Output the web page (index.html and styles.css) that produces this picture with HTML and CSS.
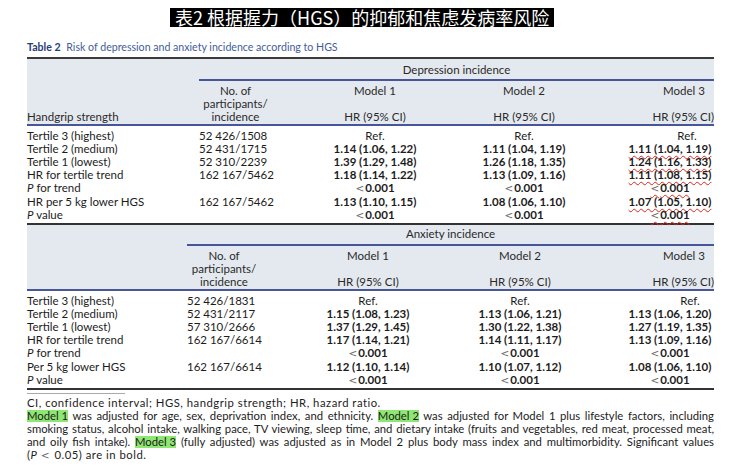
FILE: index.html
```html
<!DOCTYPE html>
<html>
<head>
<meta charset="utf-8">
<link rel="stylesheet" href="styles.css">
</head>
<body>
<div class="page">
  <div class="title-row"><span class="title">表2 根据握力（HGS）的抑郁和焦虑发病率风险</span></div>
  <div class="caption"><b>Table 2</b> Risk of depression and anxiety incidence according to HGS</div>
  <div class="table">
    <section class="sec sec1">
      <div class="head">
        <div class="span-title">Depression incidence</div>
        <div class="grid head-grid">
          <div class="c label hl">Handgrip strength</div>
          <div class="c n nh">No. of<br>participants/<br>incidence</div>
          <div class="c m mh"><span>Model 1</span><span>HR (95% CI)</span></div>
          <div class="c m mh"><span>Model 2</span><span>HR (95% CI)</span></div>
          <div class="c m m3 m3h mh"><span>Model 3</span><span>HR (95% CI)</span></div>
        </div>
      </div>
      <div class="grid rows">
        <div class="c label">Tertile 3 (highest)</div><div class="c n">52 426/1508</div><div class="c m">Ref.</div><div class="c m">Ref.</div><div class="c m m3 m3r">Ref.</div>
        <div class="c label">Tertile 2 (medium)</div><div class="c n">52 431/1715</div><div class="c m"><b>1.14 (1.06, 1.22)</b></div><div class="c m"><b>1.11 (1.04, 1.19)</b></div><div class="c m m3"><b class="wavy">1.11 (1.04, 1.19)</b></div>
        <div class="c label">Tertile 1 (lowest)</div><div class="c n">52 310/2239</div><div class="c m"><b>1.39 (1.29, 1.48)</b></div><div class="c m"><b>1.26 (1.18, 1.35)</b></div><div class="c m m3"><b class="wavy">1.24 (1.16, 1.33)</b></div>
        <div class="c label">HR for tertile trend</div><div class="c n">162 167/5462</div><div class="c m"><b>1.18 (1.14, 1.22)</b></div><div class="c m"><b>1.13 (1.09, 1.16)</b></div><div class="c m m3"><b class="wavy">1.11 (1.08, 1.15)</b></div>
        <div class="c label"><i>P</i> for trend</div><div class="c n"></div><div class="c m"><span class="lt">&lt;</span><b>0.001</b></div><div class="c m"><span class="lt">&lt;</span><b>0.001</b></div><div class="c m m3"><span class="wavy"><span class="lt">&lt;</span><b>0.001</b></span></div>
        <div class="c label">HR per 5 kg lower HGS</div><div class="c n">162 167/5462</div><div class="c m"><b>1.13 (1.10, 1.15)</b></div><div class="c m"><b>1.08 (1.06, 1.10)</b></div><div class="c m m3"><b class="wavy">1.07 (1.05, 1.10)</b></div>
        <div class="c label"><i>P</i> value</div><div class="c n"></div><div class="c m"><span class="lt">&lt;</span><b>0.001</b></div><div class="c m"><span class="lt">&lt;</span><b>0.001</b></div><div class="c m m3"><span class="wavy"><span class="lt">&lt;</span><b>0.001</b></span></div>
      </div>
    </section>
    <section class="sec sec2">
      <div class="head">
        <div class="span-title">Anxiety incidence</div>
        <div class="grid head-grid">
          <div class="c label hl"></div>
          <div class="c n nh">No. of<br>participants/<br>incidence</div>
          <div class="c m mh"><span>Model 1</span><span>HR (95% CI)</span></div>
          <div class="c m mh"><span>Model 2</span><span>HR (95% CI)</span></div>
          <div class="c m m3 m3h mh"><span>Model 3</span><span>HR (95% CI)</span></div>
        </div>
      </div>
      <div class="grid rows">
        <div class="c label">Tertile 3 (highest)</div><div class="c n">52 426/1831</div><div class="c m">Ref.</div><div class="c m">Ref.</div><div class="c m m3 m3r">Ref.</div>
        <div class="c label">Tertile 2 (medium)</div><div class="c n">52 431/2117</div><div class="c m"><b>1.15 (1.08, 1.23)</b></div><div class="c m"><b>1.13 (1.06, 1.21)</b></div><div class="c m m3"><b>1.13 (1.06, 1.20)</b></div>
        <div class="c label">Tertile 1 (lowest)</div><div class="c n">57 310/2666</div><div class="c m"><b>1.37 (1.29, 1.45)</b></div><div class="c m"><b>1.30 (1.22, 1.38)</b></div><div class="c m m3"><b>1.27 (1.19, 1.35)</b></div>
        <div class="c label">HR for tertile trend</div><div class="c n">162 167/6614</div><div class="c m"><b>1.17 (1.14, 1.21)</b></div><div class="c m"><b>1.14 (1.11, 1.17)</b></div><div class="c m m3"><b>1.13 (1.09, 1.16)</b></div>
        <div class="c label"><i>P</i> for trend</div><div class="c n"></div><div class="c m"><span class="lt">&lt;</span><b>0.001</b></div><div class="c m"><span class="lt">&lt;</span><b>0.001</b></div><div class="c m m3"><span class="lt">&lt;</span><b>0.001</b></div>
        <div class="c label">Per 5 kg lower HGS</div><div class="c n">162 167/6614</div><div class="c m"><b>1.12 (1.10, 1.14)</b></div><div class="c m"><b>1.10 (1.07, 1.12)</b></div><div class="c m m3"><b>1.08 (1.06, 1.10)</b></div>
        <div class="c label"><i>P</i> value</div><div class="c n"></div><div class="c m"><span class="lt">&lt;</span><b>0.001</b></div><div class="c m"><span class="lt">&lt;</span><b>0.001</b></div><div class="c m m3"><span class="lt">&lt;</span><b>0.001</b></div>
      </div>
    </section>
  </div>
  <div class="sep"></div>
  <div class="notes">
    <div class="line loose">CI, confidence interval; HGS, handgrip strength; HR, hazard ratio.</div>
    <div class="line just"><mark>Model 1</mark> was adjusted for age, sex, deprivation index, and ethnicity. <mark>Model 2</mark> was adjusted for Model 1 plus lifestyle factors, including</div>
    <div class="line just">smoking status, alcohol intake, walking pace, TV viewing, sleep time, and dietary intake (fruits and vegetables, red meat, processed meat,</div>
    <div class="line just">and oily fish intake). <mark>Model 3</mark> (fully adjusted) was adjusted as in Model 2 plus body mass index and multimorbidity. Significant values</div>
    <div class="line loose">(<i>P</i> <span class="lt">&lt;</span> 0.05) are in bold.</div>
  </div>
</div>
</body>
</html>
```

FILE: styles.css
```css
body {
  margin: 0;
  background: #fff;
  font-family: Lato, "Liberation Sans", sans-serif;
  color: #1c1c1c;
}
.page {
  width: 687px;
  padding: 8px 0 0 27px;
}
.title-row {
  height: 19px;
  padding-left: 143px;
}
.title {
  display: inline-block;
  background: #000;
  color: #fff;
  font-family: "Noto Sans CJK SC", sans-serif;
  font-size: 18px;
  line-height: 19px;
  padding: 0 5px;
}
.caption {
  margin-top: 14px;
  font-size: 10.6px;
  line-height: 13px;
  color: #3f5d9c;
}
.caption b {
  color: #1f3e7c;
  margin-right: 3px;
}
.table {
  margin-top: 3px;
  border-top: 2px solid #3b3b3b;
  font-size: 11.5px;
}
.head {
  background: #e4e9ef;
  padding-top: 4px;
  color: #2a2a2a;
}
.sec2 .head { padding-top: 2px; }
.span-title {
  text-align: center;
  line-height: 13px;
  padding-bottom: 3px;
  border-bottom: 2px solid #47559a;
}
.sec1 .span-title { margin-left: 172px; }
.sec2 .span-title { margin-left: 160px; padding-bottom: 4px; }
.grid {
  display: grid;
}
.sec1 .grid { grid-template-columns: 172px 101px 150px 148px 116px; }
.sec2 .grid { grid-template-columns: 160px 113px 136px 168px 110px; }
.head-grid {
  padding: 3px 0 1px;
  border-bottom: 2px solid #47559a;
}
.c {
  line-height: 13px;
  white-space: nowrap;
}
.hl { align-self: end; }
.nh { text-align: center; }
.sec1 .nh { padding-right: 28px; }
.sec2 .nh { padding-right: 39px; }
.m { text-align: center; }
.mh {
  display: flex;
  flex-direction: column;
  justify-content: space-between;
  align-items: center;
  height: 39px;
}
.mh span:last-child { margin-top: auto; }
.sec1 .m3 { padding-left: 28px; }
.sec2 .m3 { padding-left: 22px; }
.sec1 .m3h { padding-left: 56px; }
.sec2 .m3h { padding-left: 50px; }
.m3h span:last-child { align-self: flex-end; }
.sec1 .m3r, .sec2 .m3r { padding-left: 62px; }
.rows {
  padding: 3px 0 1px;
  border-bottom: 2px solid #333;
}
.c b { font-weight: 700; }
.lt {
  font-family: "DejaVu Sans", sans-serif;
  color: #6a6a6a;
  font-weight: 400;
  font-size: 10.5px;
  margin-right: 1px;
}
.wavy {
  text-decoration: underline wavy #e0241b;
  text-decoration-thickness: 1px;
  text-underline-offset: 2px;
}
.sep {
  width: 98px;
  margin-top: 3px;
  border-top: 1px solid #aaa;
}
.notes {
  margin-top: 2px;
  font-size: 11.3px;
  line-height: 13px;
  color: #1c1c1c;
}
.line {
  white-space: nowrap;
  height: 13px;
}
.loose { letter-spacing: 0.5px; }
.just {
  text-align: justify;
  text-align-last: justify;
}
mark {
  display: inline-block;
  line-height: 12px;
  background: #8fe773;
  color: inherit;
}
```
